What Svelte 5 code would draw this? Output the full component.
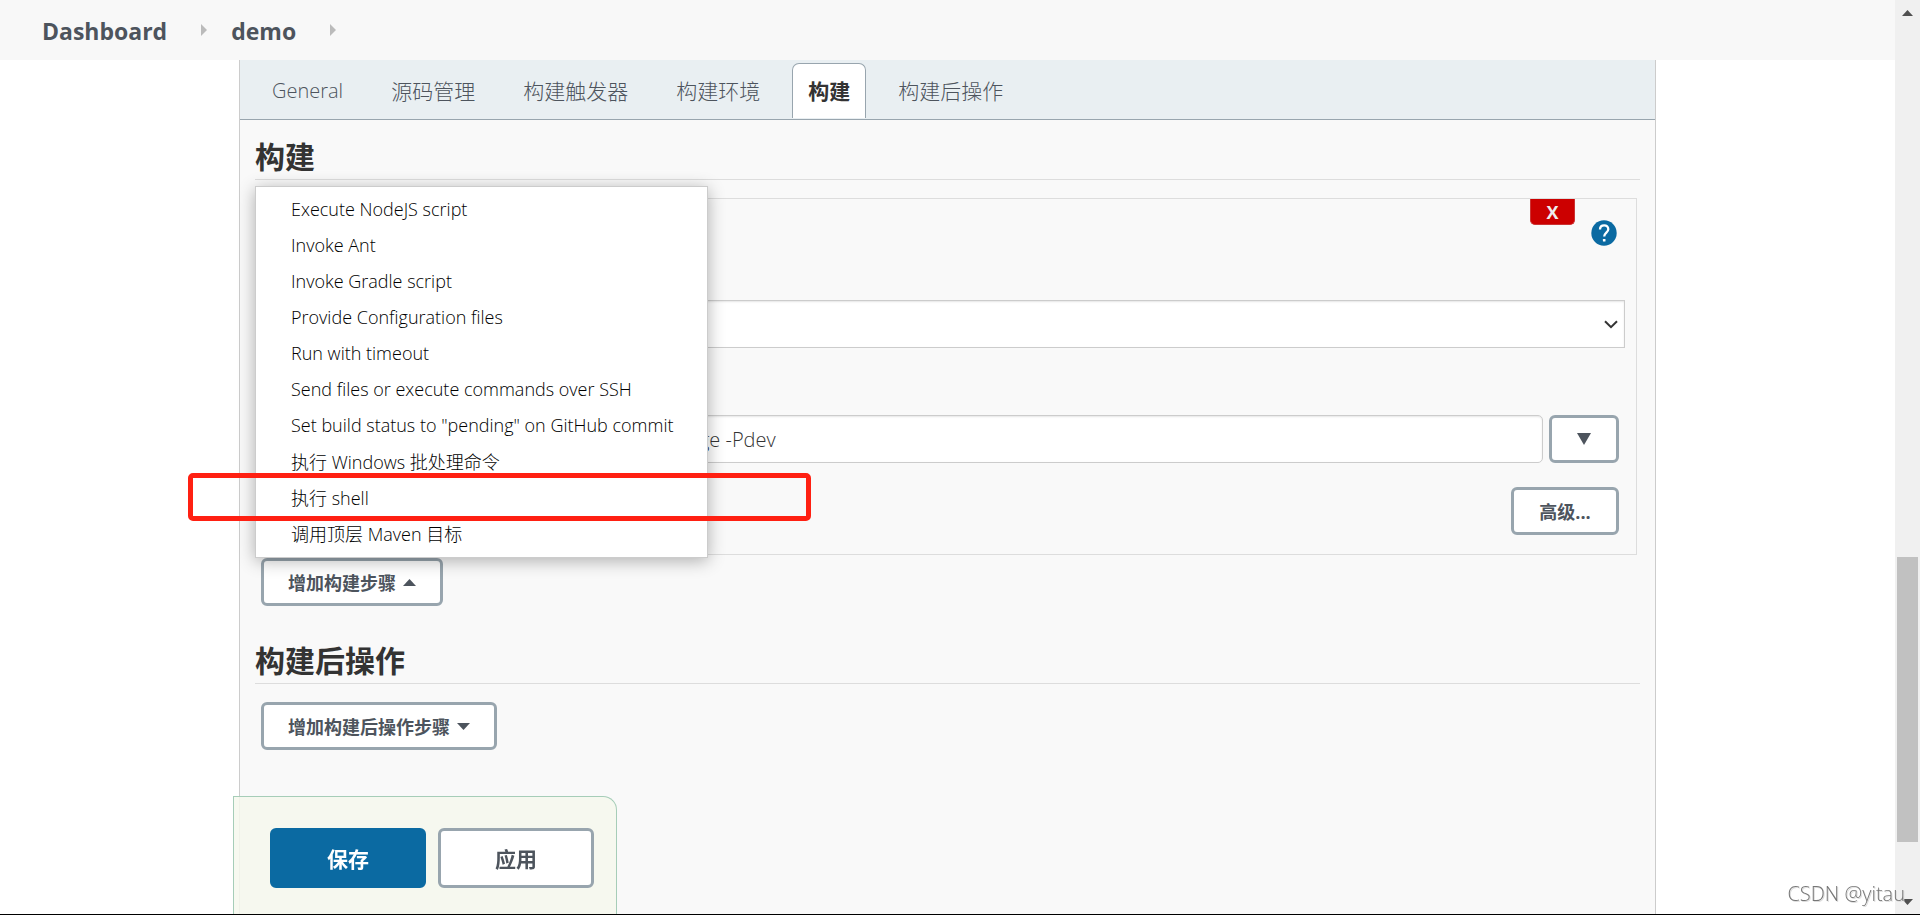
<script lang="ts">
  type Tab = { id: string; label: string };

  const breadcrumbs = ['Dashboard', 'demo'];

  const tabs: Tab[] = [
    { id: 'general', label: 'General' },
    { id: 'scm', label: '源码管理' },
    { id: 'triggers', label: '构建触发器' },
    { id: 'environment', label: '构建环境' },
    { id: 'build', label: '构建' },
    { id: 'post-build', label: '构建后操作' },
  ];

  const buildSteps = [
    'Execute NodeJS script',
    'Invoke Ant',
    'Invoke Gradle script',
    'Provide Configuration files',
    'Run with timeout',
    'Send files or execute commands over SSH',
    'Set build status to "pending" on GitHub commit',
    '执行 Windows 批处理命令',
    '执行 shell',
    '调用顶层 Maven 目标',
  ];

  const highlighted = '执行 shell';

  let activeTab = $state('build');
  let menuOpen = $state(true);
  let goals = $state('clean package -Pdev');
</script>

<div class="window">
  <div class="page">
    <nav class="breadcrumbs">
      {#each breadcrumbs as crumb}
        <a href="#{crumb}">{crumb}</a>
        <svg width="6" height="12" viewBox="0 0 6 12"><path d="M0 0l6 6-6 6z" fill="#bbb" /></svg>
      {/each}
    </nav>

    <main class="config">
      <div class="tab-bar">
        {#each tabs as tab}
          <button
            class="tab"
            class:latin={tab.id === 'general'}
            class:active={activeTab === tab.id}
            onclick={() => (activeTab = tab.id)}
          >
            {tab.label}
          </button>
        {/each}
      </div>

      <section class="section">
        <h2>构建</h2>

        <div class="builder">
          <div class="builder-head">
            <button class="delete" aria-label="Delete">X</button>
            <button class="help" aria-label="Help">
              <svg width="26" height="26" viewBox="0 0 26 26">
                <circle cx="13" cy="13" r="12.7" fill="#0b6aa2" />
                <path
                  d="M9 9.6C9 7 10.8 5.3 13.2 5.3s4.1 1.7 4.1 3.9c0 3.2-4.1 3.7-4.1 7.3"
                  fill="none"
                  stroke="#fff"
                  stroke-width="2.3"
                />
                <rect x="11.9" y="18.9" width="2.6" height="2.6" rx=".5" fill="#fff" />
              </svg>
            </button>
          </div>

          <div class="select-wrap">
            <select aria-label="Maven Version"><option></option></select>
            <svg width="14" height="9" viewBox="0 0 14 9">
              <path d="M1 1.2l6 6 6-6" fill="none" stroke="#333" stroke-width="2" />
            </svg>
          </div>

          <div class="goals">
            <input type="text" aria-label="Goals" bind:value={goals} />
            <button class="btn expand" aria-label="Expand">
              <svg width="14" height="12" viewBox="0 0 14 12"><path d="M0 0h14L7 12z" fill="#4d545d" /></svg>
            </button>
          </div>

          <div class="advanced">
            <button class="btn">高级...</button>
          </div>
        </div>

        <div class="add-step">
          <button class="btn" aria-expanded={menuOpen} onclick={() => (menuOpen = !menuOpen)}>
            增加构建步骤
            <svg width="13" height="7" viewBox="0 0 13 7"><path d="M0 7h13L6.500 0z" fill="#4d545d" /></svg>
          </button>
          {#if menuOpen}
            <ul class="menu">
              {#each buildSteps as step}
                <li class:marked={step === highlighted}>
                  <button>{step}</button>
                </li>
              {/each}
            </ul>
          {/if}
        </div>
      </section>

      <section class="section post">
        <h2>构建后操作</h2>
        <div class="add-step">
          <button class="btn">
            增加构建后操作步骤
            <svg width="13" height="7" viewBox="0 0 13 7"><path d="M0 0h13L6.500 7z" fill="#4d545d" /></svg>
          </button>
        </div>
      </section>
    </main>

    <div class="bottom-bar">
      <button class="btn large primary">保存</button>
      <button class="btn large">应用</button>
    </div>
  </div>

  <div class="scrollbar" aria-hidden="true">
    <svg width="11" height="6" viewBox="0 0 11 6"><path d="M0 6h11L5.500 0z" fill="#505050" /></svg>
    <div class="track"><div class="thumb"></div></div>
    <svg width="11" height="6" viewBox="0 0 11 6"><path d="M0 0h11L5.500 6z" fill="#505050" /></svg>
  </div>

  <span class="watermark">CSDN @yitau</span>
</div>

<style>
  :global(body) {
    margin: 0;
    background: #fff;
  }

  .window {
    display: flex;
    box-sizing: border-box;
    min-height: 100vh;
    border-bottom: 1px solid #000;
    font-family: 'Open Sans', 'Noto Sans CJK SC', sans-serif;
    font-size: 18px;
    color: #333;
  }

  button,
  input,
  select {
    font-family: inherit;
    font-size: inherit;
    color: inherit;
    box-sizing: border-box;
  }

  button {
    cursor: pointer;
  }

  svg {
    display: block;
    flex: none;
  }

  .page {
    flex: 1;
    display: flex;
    flex-direction: column;
    min-width: 0;
  }

  .breadcrumbs {
    display: flex;
    align-items: center;
    height: 60px;
    padding-left: 42px;
    background: #f8f8f8;
  }

  .breadcrumbs a {
    margin-right: 34px;
    padding-top: 2px;
    font-size: 23px;
    font-weight: 700;
    color: #4d545d;
    text-decoration: none;
  }

  .breadcrumbs svg {
    margin-right: 24px;
  }

  .config {
    flex: 1;
    margin: 0 239px;
    border: 1px solid #ccc;
    border-width: 0 1px;
    background: #f9f9f9;
  }

  .tab-bar {
    display: flex;
    align-items: flex-end;
    gap: 16px;
    box-sizing: border-box;
    height: 60px;
    padding: 0 16px 1px;
    background: #e9eff2;
    border-bottom: 1px solid #98a5ae;
  }

  .tab {
    height: 55px;
    padding: 0 15px 2px;
    border: 1px solid transparent;
    border-bottom: 0;
    border-radius: 7px 7px 0 0;
    background: none;
    font-size: 21px;
    font-weight: 300;
    color: #4d545d;
    white-space: nowrap;
  }

  .tab.latin {
    font-size: 20px;
  }

  .tab.active {
    background: #fff;
    border-color: #98a5ae;
    font-weight: 700;
    color: #333;
  }

  .section {
    padding: 16px 15px 0;
  }

  .section.post {
    padding-top: 34px;
  }

  h2 {
    margin: 0;
    padding-bottom: 1px;
    border-bottom: 1px solid #ddd;
    font-size: 30px;
    line-height: 42px;
    font-weight: 700;
  }

  .builder {
    margin: 18px 3px 0 0;
    padding: 0 11px 19px;
    border: 1px solid #ddd;
  }

  .builder-head {
    display: flex;
    justify-content: flex-end;
    align-items: flex-start;
    gap: 16px;
    height: 101px;
    padding-right: 8px;
  }

  .delete {
    width: 45px;
    height: 26px;
    padding: 0;
    border: 1px solid #c33;
    border-top: 0;
    border-radius: 0 0 5px 5px;
    background: #c00;
    font-weight: 700;
    line-height: 24px;
    color: #eee;
  }

  .help {
    margin-top: 21px;
    padding: 0;
    border: 0;
    background: none;
  }

  .select-wrap {
    display: grid;
    align-items: center;
  }

  .select-wrap > * {
    grid-area: 1 / 1;
  }

  .select-wrap svg {
    justify-self: end;
    margin-right: 7px;
    pointer-events: none;
  }

  select,
  input {
    width: 100%;
    height: 48px;
    padding: 0 10px;
    border: 1px solid #ccc;
    background: #fff;
    box-shadow: inset 0 1px 2px rgba(0, 0, 0, 0.1);
  }

  select {
    appearance: none;
  }

  .goals {
    display: flex;
    gap: 6px;
    margin: 67px 6px 0 316px;
  }

  input {
    flex: 1;
    min-width: 0;
    border-radius: 5px;
    font-size: 20px;
    font-weight: 300;
  }

  .btn {
    display: flex;
    align-items: center;
    justify-content: center;
    gap: 7px;
    height: 48px;
    padding: 0 24px;
    border: 3px solid #98a5ae;
    border-radius: 6px;
    background: #fff;
    font-weight: 700;
    color: #4d545d;
    white-space: nowrap;
  }

  .expand {
    width: 70px;
  }

  .advanced {
    display: flex;
    justify-content: flex-end;
    margin: 24px 6px 0 0;
  }

  .advanced .btn {
    min-width: 108px;
  }

  .add-step {
    position: relative;
    display: flex;
    margin: 3px 0 0 6px;
  }

  .post .add-step {
    margin-top: 18px;
  }

  .menu {
    position: absolute;
    left: -6px;
    bottom: 100%;
    box-sizing: border-box;
    width: 453px;
    margin: 0;
    padding: 5px 0;
    list-style: none;
    border: 1px solid #ccc;
    background: #fff;
    box-shadow: 0 3px 16px rgba(0, 0, 0, 0.3);
  }

  .menu li {
    position: relative;
  }

  .menu button {
    width: 100%;
    height: 36px;
    padding: 0 35px 2px;
    border: 0;
    background: none;
    font-size: 18px;
    font-weight: 300;
    color: #000;
    text-align: left;
    white-space: nowrap;
  }

  /* red frame around the step to pick */
  .marked::after {
    content: '';
    position: absolute;
    inset: -7px -104px -5px -68px;
    border: 5px solid #ff2012;
    border-radius: 5px;
    pointer-events: none;
  }

  .bottom-bar {
    position: fixed;
    left: 233px;
    bottom: 1px;
    display: flex;
    gap: 12px;
    padding: 31px 22px 26px 36px;
    border: 1px solid #a6cdb8;
    border-bottom: 0;
    border-radius: 0 14px 0 0;
    background: rgba(246, 248, 237, 0.85);
  }

  .large {
    width: 156px;
    height: 60px;
    font-size: 21px;
  }

  .primary {
    border-color: #0b6aa2;
    background: #0b6aa2;
    color: #fff;
  }

  .scrollbar {
    display: flex;
    flex-direction: column;
    align-items: center;
    box-sizing: border-box;
    width: 25px;
    padding: 10px 0 9px;
    background: #f0f0f0;
  }

  .track {
    flex: 1;
    display: flex;
    flex-direction: column;
    justify-content: flex-end;
    padding-bottom: 57px;
  }

  .thumb {
    width: 21px;
    height: 285px;
    background: #c1c1c1;
  }

  .watermark {
    position: fixed;
    right: 15px;
    bottom: 8px;
    font-size: 20px;
    font-weight: 300;
    color: #777;
    text-shadow: 1px 1px 0 #ddd;
  }
</style>
